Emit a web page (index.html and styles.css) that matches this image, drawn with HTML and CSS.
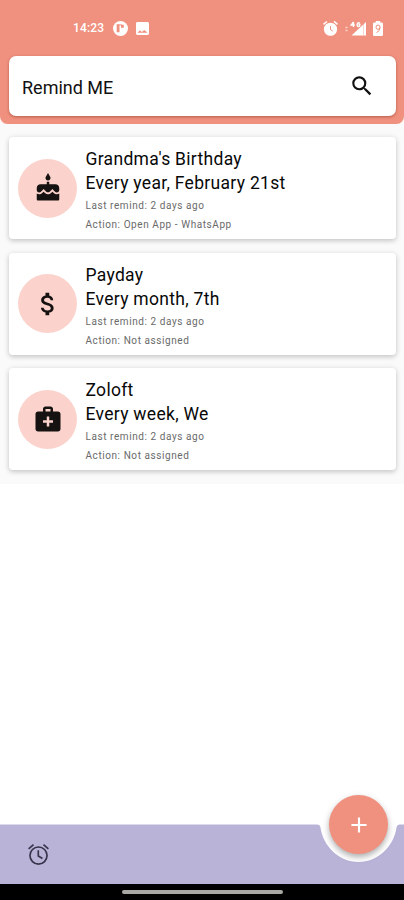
FILE: index.html
```html
<!DOCTYPE html>
<html lang="en">
<head>
<meta charset="utf-8">
<title>Remind ME</title>
<link rel="stylesheet" href="styles.css">
</head>
<body>
<div class="app">
  <header class="header">
    <div class="status">
      <span class="time">14:23</span>
      <svg class="app-dot" viewBox="0 0 15 15"><circle cx="7.5" cy="7.5" r="7.500" fill="#fff"/><path d="M3.700 3.500h2.800v7.700H3.700zM8 3.800h2.800v3H8z" fill="#f0907e"/><path d="M3.700 3.900h5" stroke="#f0907e" stroke-width="1"/></svg>
      <svg class="photo" viewBox="3 3 18 18"><path fill="#fff" d="M21 19V5c0-1.100-.9-2-2-2H5c-1.100 0-2 .9-2 2v14c0 1.100.9 2 2 2h14c1.100 0 2-.9 2-2zM8.500 14.500l2.500 2.510L14.500 14l4.500 4H5l3.500-3.500z"/></svg>
      <span class="spacer"></span>
      <svg class="alarm-small" viewBox="2 2 20 20"><path fill="#fff" d="M22 5.700l-4.600-3.900-1.300 1.500 4.600 3.900L22 5.700zM7.900 3.400L6.600 1.900 2 5.700l1.300 1.500 4.600-3.800z"/><circle cx="12" cy="13" r="8.800" fill="#fff"/><path d="M12 9v4.500l3 2" stroke="#f0907e" stroke-width="1.300" fill="none"/></svg>
      <svg class="signal" viewBox="0 0 22 15"><path d="M0.500 6.500h2M0.500 9.500h2" stroke="#fff" stroke-opacity=".6" stroke-width="1.300"/><path d="M21 1v13.500H6.500z" fill="#fff"/><path d="M18.500 2v12.500" stroke="#f0907e" stroke-opacity=".35"/><path d="M8.500 1L6.200 4h3.600M8.500 1v5M14.800 2.200c-2.800-2-3.500 3.300-1.400 3.300 1.500 0 1.400-1 1.400-2h-1.300" stroke="#fff" stroke-width="1.400" fill="none"/></svg>
      <svg class="battery" viewBox="0 0 10 15"><path fill="#fff" d="M1.200 1.500h1.600V0h4.400v1.500h1.600Q10 1.500 10 2.700v11Q10 15 8.800 15H1.200Q0 15 0 13.700v-11Q0 1.500 1.200 1.500z"/><path d="M3.500 11.500Q7 10.500 7 6.200 7 4 5 4T3 6.200 5 8.300t2-2" stroke="#f0907e" stroke-width="1" fill="none"/></svg>
    </div>
    <div class="search">
      <span>Remind ME</span>
      <svg viewBox="0 0 24 24"><path d="M15.500 14h-.79l-.28-.27A6.471 6.471 0 0 0 16 9.500 6.500 6.500 0 1 0 9.500 16c1.610 0 3.090-.59 4.230-1.570l.27.28v.79l5 4.990L20.490 19l-4.990-5zm-6 0C7.010 14 5 11.990 5 9.500S7.010 5 9.500 5 14 7.010 14 9.500 11.990 14 9.500 14z"/></svg>
    </div>
  </header>

  <main class="list">
    <article class="card">
      <div class="avatar"><svg viewBox="0 0 24 24"><path d="M12 6c1.110 0 2-.9 2-2 0-.38-.1-.73-.29-1.030L12 0l-1.710 2.970c-.19.3-.29.65-.29 1.030 0 1.100.9 2 2 2zm4.600 9.990l-1.070-1.070-1.080 1.070c-1.300 1.300-3.580 1.310-4.890 0l-1.070-1.070-1.090 1.070C6.750 16.640 5.880 17 4.960 17c-.73 0-1.400-.23-1.960-.61V21c0 .55.45 1 1 1h16c.55 0 1-.45 1-1v-4.610c-.56.38-1.230.61-1.960.61-.92 0-1.790-.36-2.440-1.010zM18 9h-5V7h-2v2H6c-1.660 0-3 1.340-3 3v1.540c0 1.080.88 1.960 1.960 1.960.52 0 1.020-.2 1.380-.57l2.140-2.130 2.130 2.130c.74.74 2.030.74 2.770 0l2.140-2.130 2.130 2.130c.37.37.86.57 1.380.57 1.080 0 1.960-.88 1.960-1.960V12C21 10.340 19.660 9 18 9z"/></svg></div>
      <div class="info">
        <h2>Grandma's Birthday</h2>
        <h3>Every year, February 21st</h3>
        <p>Last remind: 2 days ago</p>
        <p>Action: Open App - WhatsApp</p>
      </div>
    </article>
    <article class="card">
      <div class="avatar"><svg viewBox="0 0 24 24"><path d="M11.800 10.900c-2.270-.59-3-1.200-3-2.150 0-1.090 1.010-1.850 2.700-1.850 1.780 0 2.440.85 2.500 2.100h2.210c-.07-1.720-1.120-3.300-3.210-3.810V3h-3v2.160c-1.940.42-3.500 1.680-3.500 3.610 0 2.310 1.910 3.460 4.700 4.130 2.500.6 3 1.480 3 2.410 0 .69-.49 1.790-2.700 1.790-2.060 0-2.870-.92-2.980-2.100h-2.200c.12 2.190 1.760 3.420 3.680 3.830V21h3v-2.150c1.950-.37 3.500-1.500 3.500-3.550 0-2.840-2.430-3.810-4.700-4.400z"/></svg></div>
      <div class="info">
        <h2>Payday</h2>
        <h3>Every month, 7th</h3>
        <p>Last remind: 2 days ago</p>
        <p>Action: Not assigned</p>
      </div>
    </article>
    <article class="card">
      <div class="avatar"><svg viewBox="0 0 24 24"><path d="M20 6h-4V4c0-1.100-.9-2-2-2h-4c-1.100 0-2 .9-2 2v2H4c-1.100 0-2 .9-2 2v12c0 1.100.9 2 2 2h16c1.100 0 2-.9 2-2V8c0-1.100-.9-2-2-2zM10 4h4v2h-4V4zm6 11h-3v3h-2v-3H8v-2h3v-3h2v3h3v2z"/></svg></div>
      <div class="info">
        <h2>Zoloft</h2>
        <h3>Every week, We</h3>
        <p>Last remind: 2 days ago</p>
        <p>Action: Not assigned</p>
      </div>
    </article>
  </main>

  <footer class="bottom">
    <svg class="bar-shape" viewBox="0 0 404 60"><path fill="#b9b4d7" d="M0 .5H317Q320 .5 320.500 3.500C323 22 339 38 358.500 38S394 22 396.500 3.500Q397 .5 400 .5H404V60H0z"/></svg>
    <svg class="alarm" viewBox="0 0 24 24"><g fill="none" stroke="#37334a" stroke-width="1.600"><circle cx="12" cy="13" r="8.200"/><path d="M11.800 8v5.500l4 2.400M2.500 6.500L7.200 2.600M21.500 6.500l-4.700-3.900"/></g></svg>
    <button class="fab" aria-label="Add"><svg viewBox="0 0 24 24"><path fill="#fff" d="M19 13h-6v6h-2v-6H5v-2h6V5h2v6h6v2z"/></svg></button>
  </footer>
  <div class="gesture"><span></span></div>
</div>
</body>
</html>
```
FILE: styles.css
```css
* { box-sizing: border-box; }
body { margin: 0; background: #fff; font-family: Roboto, "Liberation Sans", sans-serif; color: #111; }
.app { width: 404px; height: 900px; display: flex; flex-direction: column; overflow: hidden; }
svg { display: block; flex: none; }

.header { height: 124px; flex: none; background: #f0907e; border-radius: 0 0 8px 8px; padding: 0 8px 0 9px; box-shadow: 0 1px 3px rgba(240, 144, 126, .3); }
.status { height: 56px; display: flex; align-items: center; padding: 0 13px 0 64px; }
.time { font-size: 12px; font-weight: 500; color: #fff; width: 32px; letter-spacing: .15px; white-space: nowrap; }
.app-dot { width: 15px; height: 15px; margin-left: 8px; }
.photo { width: 13px; height: 13px; margin-left: 8px; }
.spacer { flex: 1; }
.alarm-small { width: 15px; height: 15px; overflow: visible; }
.signal { width: 22px; height: 15px; margin-left: 7px; }
.battery { width: 10px; height: 15px; margin-left: 6px; }
.search { height: 60px; background: #fff; border-radius: 7px; display: flex; align-items: center; justify-content: space-between; padding: 2px 21px 0 13px; font-size: 18px; box-shadow: 0 1px 3px rgba(110, 30, 15, .45); }
.search svg { width: 26px; height: 26px; margin-top: -2px; fill: #111; }

.list { display: flex; flex-direction: column; gap: 13.500px; padding: 13px 8px 14px 9px; background: #fafafa; }
.card { height: 102px; display: flex; background: #fff; border-radius: 4px; padding-left: 9px; gap: 8.500px; box-shadow: 0 2px 5px rgba(0, 0, 0, .18), 0 0 7px rgba(0, 0, 0, .06); }
.avatar { width: 59px; height: 59px; align-self: center; flex: none; border-radius: 50%; background: #fbd3cc; display: flex; align-items: center; justify-content: center; }
.avatar svg { width: 30px; height: 30px; fill: #151211; }
.info { padding-top: 10px; white-space: nowrap; }
.info h2, .info h3 { margin: 0; font-size: 17.500px; font-weight: 400; line-height: 24px; letter-spacing: .3px; color: #080808; }
.info p { margin: 0; font-size: 10px; line-height: 19px; letter-spacing: .57px; color: #6a6a6a; position: relative; top: 1px; }

.bottom { position: relative; height: 60px; flex: none; margin-top: auto; padding: 18px 0 0 26px; }
.bar-shape { position: absolute; inset: 0; width: 404px; height: 60px; }
.alarm { position: relative; width: 25px; height: 25px; }
.fab { position: absolute; right: 16px; top: -29px; width: 59px; height: 59px; padding: 0; border: 0; border-radius: 50%; background: #f0907e; display: flex; align-items: center; justify-content: center; box-shadow: 0 3px 5px rgba(0, 0, 0, .22), 0 3px 10px rgba(0, 0, 0, .12); }
.fab svg { width: 26px; height: 26px; }
.gesture { height: 16px; flex: none; background: #000; display: flex; justify-content: center; padding-top: 6px; }
.gesture span { width: 161px; height: 4px; border-radius: 2px; background: #aaa8a5; }
```
